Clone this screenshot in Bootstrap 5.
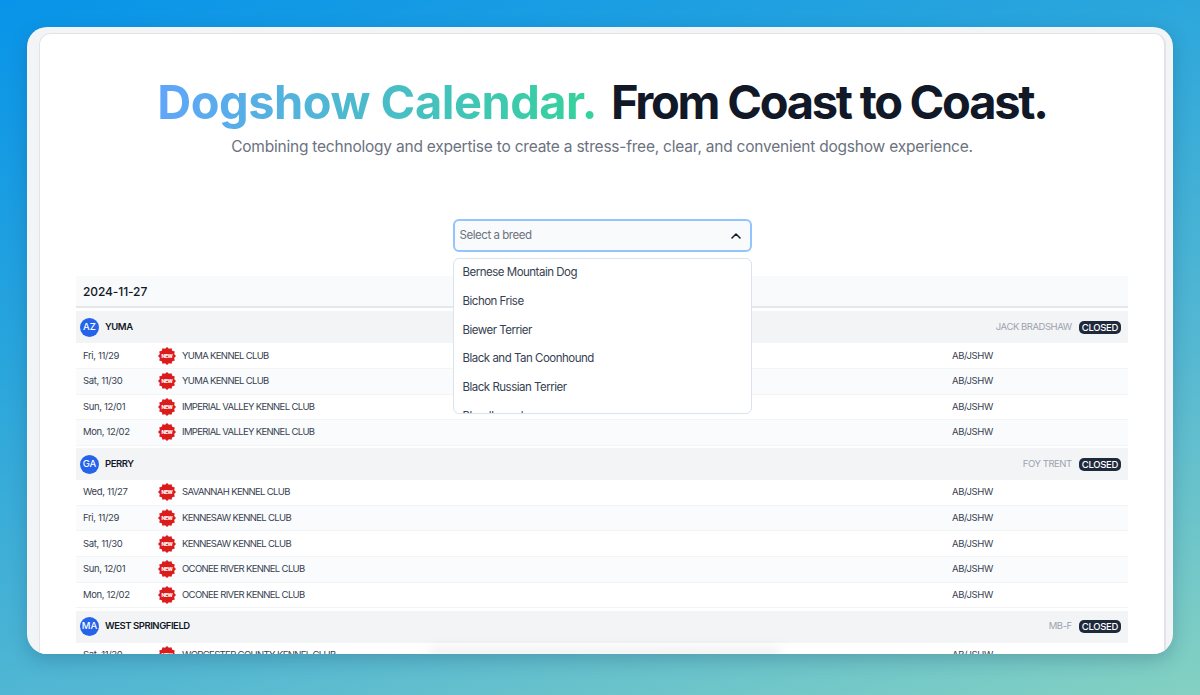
<!DOCTYPE html>
<html lang="en">
<head>
    <meta charset="UTF-8">
    <meta name="viewport" content="width=device-width, initial-scale=1.0">
    <title>Dogshow Calendar</title>
    <link href="https://cdn.jsdelivr.net/npm/bootstrap@5.3.0/dist/css/bootstrap.min.css" rel="stylesheet">
    <script src="https://cdn.jsdelivr.net/npm/bootstrap@5.3.0/dist/js/bootstrap.bundle.min.js"></script>
    <style>
        html, body { height: 100%; }
        body {
            font-family: Inter, "Liberation Sans", sans-serif;
            background: linear-gradient(162deg, #0894e9 0%, #2ba6dc 35%, #55b8d2 68%, #84d1c2 100%);
            padding: 27px 27px 41px;
            overflow: hidden;
        }
        .frame {
            height: 627px;
            background: #f3f4f6;
            border-radius: 20px;
            padding: 6px 7px 0 12px;
            box-shadow: 0 6px 18px rgba(20, 60, 90, .25);
            overflow: hidden;
        }
        .sheet {
            height: 100%;
            background: #fff;
            border: 1px solid #e2e4e8;
            border-right-width: 2px;
            border-bottom: 0;
            border-radius: 12px 12px 0 0;
            padding: 0 36px;
            overflow: hidden;
            position: relative;
        }
        .hero-title {
            margin: 40px 0 0;
            font-size: 47px;
            line-height: 56px;
            font-weight: 700;
            letter-spacing: -2.25px;
            color: #111827;
            white-space: nowrap;
        }
        .hero-title .grad {
            background: linear-gradient(90deg, #60a5fa, #34d399);
            -webkit-background-clip: text;
            background-clip: text;
            color: transparent;
            margin-right: 5px;
            letter-spacing: -.5px;
        }
        .hero-sub { margin: 5px 0 0; font-size: 15.5px; line-height: 24px; color: #6b7280; letter-spacing: -.22px; }
        .picker { width: 299px; margin: 60px auto 0; position: relative; z-index: 2; }
        .picker-box {
            height: 33px;
            border: 2px solid #93c5fd;
            border-radius: 6px;
            background: #f9fafb;
            padding: 1px 9px 0 5px;
            font-size: 11.5px;
            letter-spacing: -.45px;
            color: #6b7280;
        }
        .picker-menu {
            position: absolute;
            top: 39px;
            left: 0;
            right: 0;
            height: 156px;
            background: #fff;
            border: 1px solid #dbe3ee;
            border-radius: 6px;
            overflow: hidden;
        }
        .picker-item { height: 28.8px; line-height: 27px; padding-left: 9px; font-size: 11.5px; letter-spacing: -.5px; color: #374151; white-space: nowrap; }
        .cal { margin-top: 24px; }
        .cal-date {
            height: 32px;
            background: #f9fafb;
            border-bottom: 2px solid #e5e7eb;
            padding-left: 7px;
            font-size: 12px;
            line-height: 32px;
            font-weight: 500;
            color: #111827;
            letter-spacing: -.1px;
        }
        .cal-loc {
            height: 32px;
            margin-top: 3.4px;
            background: #f3f4f6;
            padding: 0 7px 0 4px;
        }
        .cal-group + .cal-group .cal-loc { margin-top: 2.4px; }
        .state-dot {
            width: 19px;
            height: 19px;
            border-radius: 50%;
            background: #2563eb;
            color: #fff;
            font-size: 9.5px;
            font-weight: 500;
            margin-right: 6px;
        }
        .loc-name { font-size: 9.5px; font-weight: 600; color: #111827; letter-spacing: -.45px; }
        .judge { font-size: 9.5px; color: #9ca3af; margin-right: 7px; letter-spacing: -.45px; }
        .closed {
            background: #1e293b;
            color: #fff;
            font-size: 9.5px;
            font-weight: 500;
            line-height: 13px;
            padding: 0 3px;
            border-radius: 5px;
            letter-spacing: -.3px;
        }
        .cal-row {
            height: 25.6px;
            border-bottom: 1px solid #f3f4f6;
            font-size: 9.5px;
            color: #374151;
            letter-spacing: -.35px;
        }
        .cal-row:nth-child(odd) { background: #fafbfc; }
        .cal-row > .when { width: 82px; padding-left: 7px; flex: none; }
        .cal-row > .burst { width: 24px; flex: none; display: flex; }
        .cal-row > .club { width: 770px; flex: none; letter-spacing: -.65px; }
        .bottom-glow {
            position: absolute;
            left: 390px;
            bottom: -6px;
            width: 350px;
            height: 14px;
            background: rgba(0, 0, 0, .05);
            filter: blur(6px);
        }
    </style>
</head>
<body>
    <svg width="0" height="0" class="position-absolute">
        <symbol id="new-burst" viewBox="0 0 18 18">
            <polygon fill="#dc1c1c" points="18,9 16.15,10.92 16.79,13.5 14.23,14.23 13.5,16.79 10.92,16.15 9,18 7.08,16.15 4.5,16.79 3.77,14.23 1.21,13.5 1.85,10.92 0,9 1.85,7.08 1.21,4.5 3.77,3.77 4.5,1.21 7.08,1.85 9,0 10.92,1.85 13.5,1.21 14.23,3.77 16.79,4.5 16.15,7.08"/>
            <text x="9" y="10.8" fill="#fff" font-size="5" font-weight="800" text-anchor="middle" font-family="Inter, sans-serif">NEW</text>
        </symbol>
    </svg>

    <div class="frame">
        <div class="sheet">
            <h1 class="hero-title text-center"><span class="grad">Dogshow Calendar.</span> From Coast to Coast.</h1>
            <p class="hero-sub text-center">Combining technology and expertise to create a stress-free, clear, and convenient dogshow experience.</p>

            <div class="picker">
                <div class="picker-box d-flex align-items-center justify-content-between">
                    <span>Select a breed</span>
                    <svg width="10" height="6" viewBox="0 0 10 6" fill="none" stroke="#111827" stroke-width="1.5" stroke-linecap="round" stroke-linejoin="round"><path d="M1 5l4-4 4 4"/></svg>
                </div>
                <div class="picker-menu">
                    <div class="picker-item">Bernese Mountain Dog</div>
                    <div class="picker-item">Bichon Frise</div>
                    <div class="picker-item">Biewer Terrier</div>
                    <div class="picker-item">Black and Tan Coonhound</div>
                    <div class="picker-item">Black Russian Terrier</div>
                    <div class="picker-item">Bloodhound</div>
                </div>
            </div>

            <div class="cal" id="cal">
                <div class="cal-date">2024-11-27</div>
            </div>
            <div class="bottom-glow"></div>
        </div>
    </div>

    <script>
        // shows listed per location
        const groups = [
            { st: 'AZ', name: 'YUMA', judge: 'JACK BRADSHAW', rows: [
                ['Fri, 11/29', 'YUMA KENNEL CLUB'],
                ['Sat, 11/30', 'YUMA KENNEL CLUB'],
                ['Sun, 12/01', 'IMPERIAL VALLEY KENNEL CLUB'],
                ['Mon, 12/02', 'IMPERIAL VALLEY KENNEL CLUB']
            ]},
            { st: 'GA', name: 'PERRY', judge: 'FOY TRENT', rows: [
                ['Wed, 11/27', 'SAVANNAH KENNEL CLUB'],
                ['Fri, 11/29', 'KENNESAW KENNEL CLUB'],
                ['Sat, 11/30', 'KENNESAW KENNEL CLUB'],
                ['Sun, 12/01', 'OCONEE RIVER KENNEL CLUB'],
                ['Mon, 12/02', 'OCONEE RIVER KENNEL CLUB']
            ]},
            { st: 'MA', name: 'WEST SPRINGFIELD', judge: 'MB-F', rows: [
                ['Sat, 11/30', 'WORCESTER COUNTY KENNEL CLUB']
            ]}
        ];

        let html = '';
        groups.forEach(g => {
            html += `<div class="cal-group">
                <div class="cal-loc d-flex align-items-center">
                    <span class="state-dot d-flex align-items-center justify-content-center">${g.st}</span>
                    <span class="loc-name">${g.name}</span>
                    <span class="judge ms-auto">${g.judge}</span>
                    <span class="closed">CLOSED</span>
                </div>`;
            g.rows.forEach(r => {
                html += `<div class="cal-row d-flex align-items-center">
                    <span class="when">${r[0]}</span>
                    <span class="burst"><svg width="18" height="18"><use href="#new-burst"/></svg></span>
                    <span class="club">${r[1]}</span>
                    <span>AB/JSHW</span>
                </div>`;
            });
            html += '</div>';
        });
        document.getElementById('cal').insertAdjacentHTML('beforeend', html);
    </script>
</body>
</html>
